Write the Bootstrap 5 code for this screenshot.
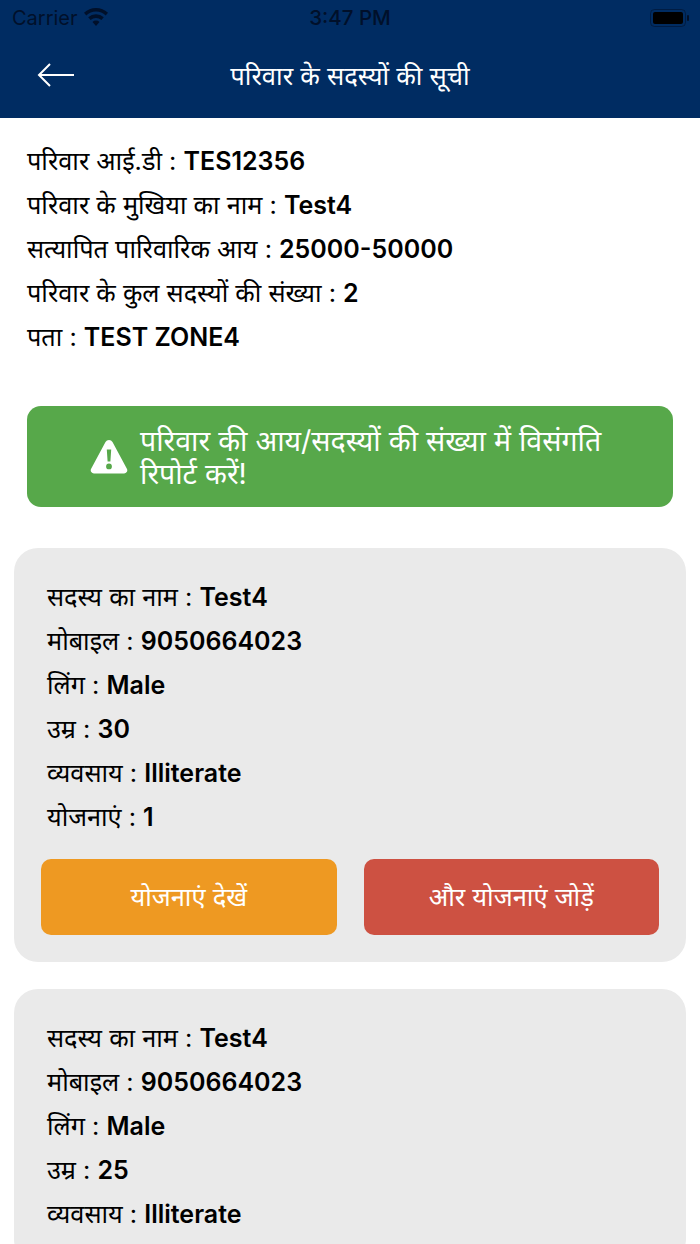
<!DOCTYPE html>
<html lang="hi"><head><meta charset="utf-8">
<link href="https://cdn.jsdelivr.net/npm/bootstrap@5.3.0/dist/css/bootstrap.min.css" rel="stylesheet">
<style>
html,body{height:1244px;overflow:hidden;background:#fff}
body{font-family:Inter,"Noto Sans","Noto Sans Devanagari","Lohit Devanagari",sans-serif;color:#000}
.topbar{height:118px;background:#002c62}
.statusrow{height:36px;padding:0 10px 0 12px;position:relative;font-family:Inter,sans-serif;font-size:20px;color:#00102a}
.clock{font-weight:500;font-size:20.5px}
.navrow{height:82px;padding:0 0 4px 37px;position:relative}
.pagetitle{font-size:25.5px;color:#fff;position:absolute;left:0;right:0;top:18px;text-align:center;line-height:44px}
.infoblock{padding:21px 27px 0;}
.inforow{font-size:25.3px;line-height:44px;height:44px;white-space:nowrap}
.inforow b{font-weight:600;font-size:25px}
.reportbtn{margin:47px 27px 0;height:101px;background:#57a84a;border-radius:14px;color:#fff;font-size:28.5px;line-height:33px;padding:0 60px 0 63px;gap:12px}
.membercard{margin:0 14px 27px;background:#eaeaea;border-radius:24px;padding:27px}
.firstcard{margin-top:41px}
.membertext{margin-left:6px}
.actionbtn{height:76px;border-radius:10px;color:#fff;font-size:25.5px;width:296px}
.act-a{background:#ee9922}
.act-b{background:#cd5142}
.actions{margin-top:20px;gap:27px}
</style></head><body>
<div class="topbar">
 <div class="statusrow d-flex align-items-center">
  <span>Carrier</span>
  <svg class="ms-1" width="28" height="20" viewBox="0 0 26 20"><path fill="#00102a" d="M13 18 9.500 14a5 5 0 0 1 7 0zM7.600 12 5.200 9.300a11.500 11.500 0 0 1 15.600 0L18.400 12a8 8 0 0 0-10.800 0zM3.300 7.400 1 4.800a17.500 17.500 0 0 1 24 0l-2.300 2.600a14 14 0 0 0-19.400 0z"/></svg>
  <span class="clock position-absolute top-50 start-50 translate-middle">3:47 PM</span>
  <svg class="ms-auto" width="40" height="20" viewBox="0 0 40 20"><rect x="0.500" y="1.500" width="35" height="17" rx="4" fill="none" stroke="#00102a" stroke-opacity=".55"/><rect x="3" y="4" width="30" height="12" rx="2" fill="#000"/><rect x="37" y="7" width="2" height="6" rx="1" fill="#00102a"/></svg>
 </div>
 <div class="navrow d-flex align-items-center">
  <svg width="38" height="26" viewBox="0 0 38 26"><path d="M37 13H2M13 2 2 13l11 11" fill="none" stroke="#fff" stroke-width="2"/></svg>
  <div class="pagetitle">परिवार के सदस्यों की सूची</div>
 </div>
</div>
<div class="infoblock">
 <div class="inforow">परिवार आई.डी : <b>TES12356</b></div>
 <div class="inforow">परिवार के मुखिया का नाम : <b>Test4</b></div>
 <div class="inforow">सत्यापित पारिवारिक आय : <b>25000-50000</b></div>
 <div class="inforow">परिवार के कुल सदस्यों की संख्या : <b>2</b></div>
 <div class="inforow">पता : <b>TEST ZONE4</b></div>
</div>
<div class="reportbtn d-flex align-items-center">
 <svg width="38" height="35" viewBox="0 0 38 35" class="flex-shrink-0"><path fill="#fff" fill-rule="evenodd" d="M15.500 3a4 4 0 0 1 7 0l14.500 27a3.200 3.200 0 0 1-3 4.500H4A3.200 3.200 0 0 1 1 30zM16.800 10.500l.8 12h2.800l.8-12zM19 24.500a2.900 2.900 0 1 0 0 5.800 2.900 2.900 0 0 0 0-5.800z"/></svg>
 <div>परिवार की आय/सदस्यों की संख्या में विसंगति रिपोर्ट करें!</div>
</div>
<div class="membercard firstcard">
 <div class="membertext">
 <div class="inforow">सदस्य का नाम : <b>Test4</b></div>
 <div class="inforow">मोबाइल : <b>9050664023</b></div>
 <div class="inforow">लिंग : <b>Male</b></div>
 <div class="inforow">उम्र : <b>30</b></div>
 <div class="inforow">व्यवसाय : <b>Illiterate</b></div>
 <div class="inforow">योजनाएं : <b>1</b></div>
 </div>
 <div class="actions d-flex">
  <div class="actionbtn act-a d-flex align-items-center justify-content-center">योजनाएं देखें</div>
  <div class="actionbtn act-b d-flex align-items-center justify-content-center">और योजनाएं जोड़ें</div>
 </div>
</div>
<div class="membercard">
 <div class="membertext">
 <div class="inforow">सदस्य का नाम : <b>Test4</b></div>
 <div class="inforow">मोबाइल : <b>9050664023</b></div>
 <div class="inforow">लिंग : <b>Male</b></div>
 <div class="inforow">उम्र : <b>25</b></div>
 <div class="inforow">व्यवसाय : <b>Illiterate</b></div>
 </div>
</div>
</body></html>
